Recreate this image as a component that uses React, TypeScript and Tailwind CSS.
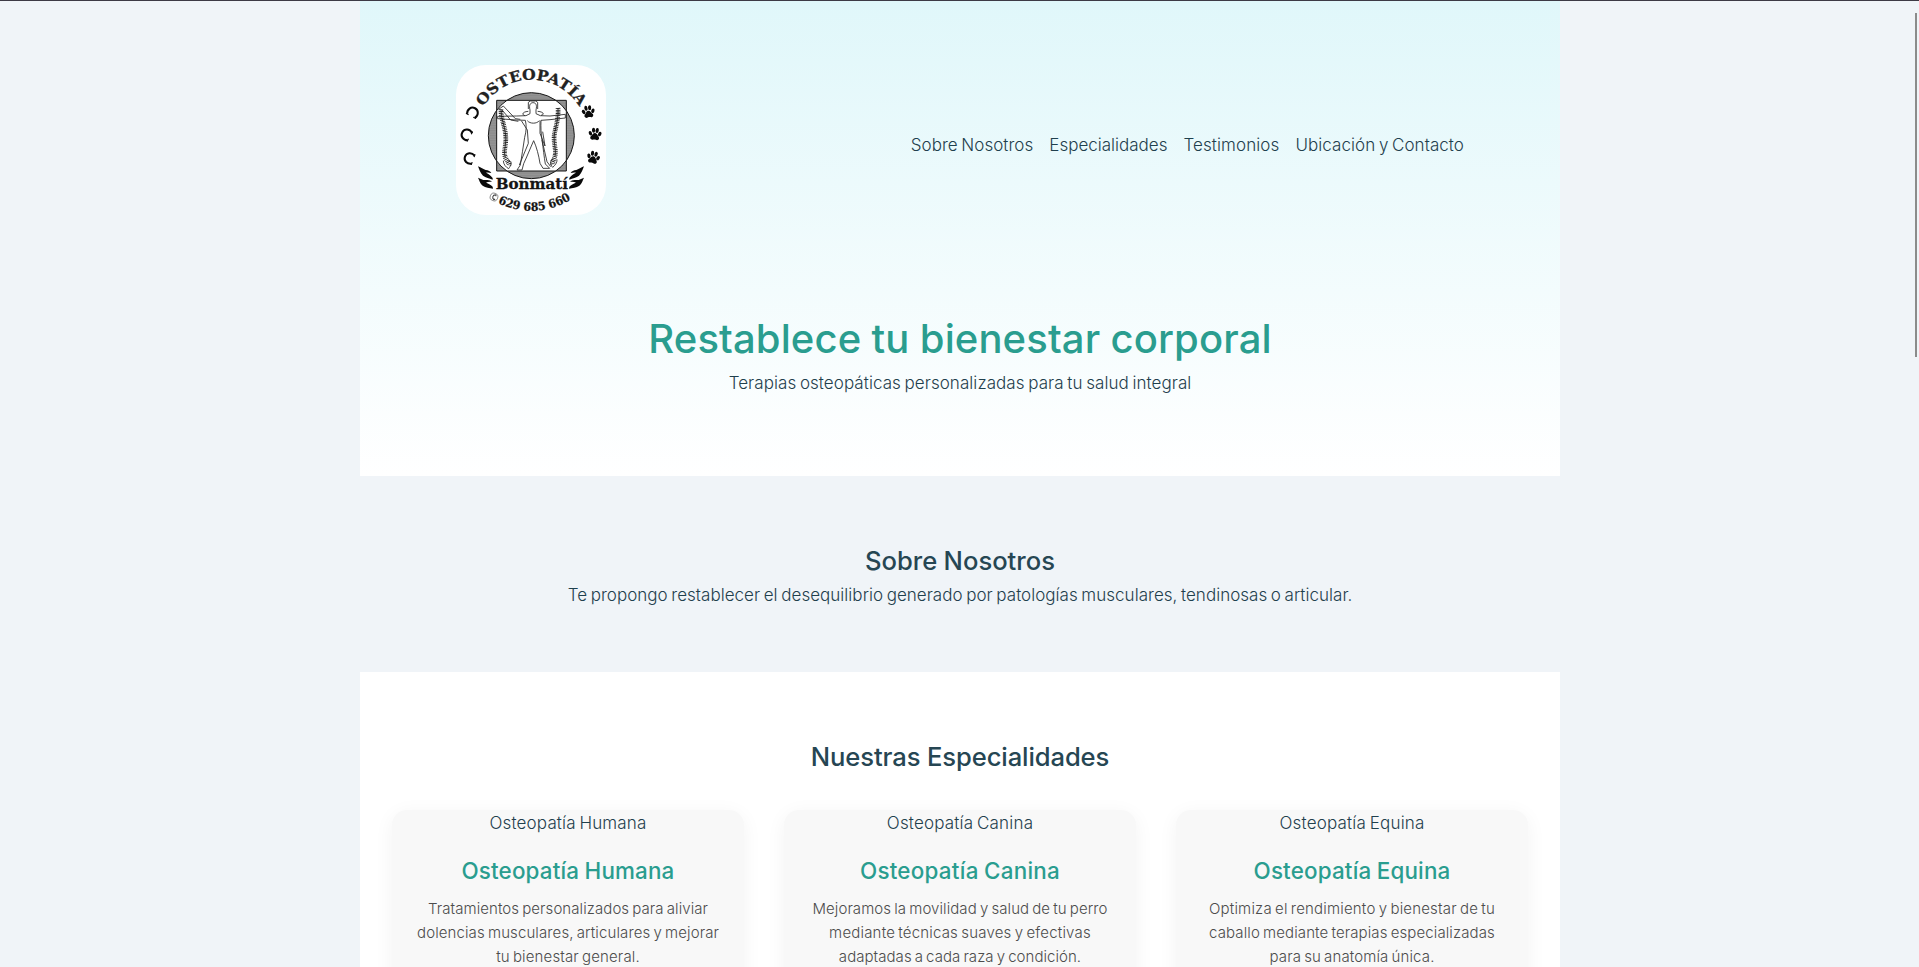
const Paw = ({ x, y, r }: { x: number; y: number; r: number }) => (
  <g transform={`translate(${x} ${y}) rotate(${r})`} fill="#0a0a0a">
    <path d="M0 -4C6 -4 8 3 12 7C16 13 10 19 4 16C1 15 -1 15 -4 16C-10 19 -16 13 -12 7C-8 3 -6 -4 0 -4Z" />
    <ellipse cx="-14" cy="-2" rx="4.8" ry="7" transform="rotate(-25 -14 -2)" />
    <ellipse cx="-5.5" cy="-12" rx="4.8" ry="7.5" transform="rotate(-6 -5.5 -12)" />
    <ellipse cx="5.5" cy="-12" rx="4.8" ry="7.5" transform="rotate(6 5.5 -12)" />
    <ellipse cx="14" cy="-2" rx="4.8" ry="7" transform="rotate(25 14 -2)" />
  </g>
);

const Horseshoe = ({ x, y, r }: { x: number; y: number; r: number }) => (
  <g transform={`translate(${x} ${y}) rotate(${r})`} fill="none" stroke="#0a0a0a">
    <path d="M11 -13C-1 -20 -15 -13 -15 0C-15 13 -1 20 11 13" strokeWidth="6" />
    <path d="M11 -17V-8M11 17V8" strokeWidth="3.5" />
  </g>
);

const Hands = () => (
  <g fill="#0a0a0a">
    <path d="M114 349C121 352 128 357 137 360C145 361 151 364 154 369C147 367 142 367 138 368C146 372 153 377 158 384L158 389C148 385 137 383 129 377C121 370 118 358 114 349Z" />
    <path d="M114 383C122 386 129 391 138 390C146 389 153 391 156 396C148 395 142 396 138 398C146 401 153 404 158 410L159 416C148 413 137 413 128 407C120 400 118 391 114 383Z" />
  </g>
);

const Logo = () => (
  <svg viewBox="48 45 450 450" className="size-[150px] rounded-[30px] bg-white" role="img">
    <defs>
      <path id="top-arc" d="M136.2 352A167.5 167.5 0 1 1 411.8 352" />
      <path id="bottom-arc" d="M91 389A226 226 0 0 0 457 389" />
      <pattern id="engraving" width="5" height="5" patternUnits="userSpaceOnUse">
        <rect width="5" height="5" fill="#a2a2a2" />
        <path d="M0 0H5M0 2.5H5" stroke="#6a6a6a" strokeWidth="1.1" />
      </pattern>
    </defs>
    <path
      fillRule="evenodd"
      fill="url(#engraving)"
      d="M274 128A129 129 0 1 1 273.9 128ZM170 151H379V363H170Z"
    />
    <g fill="none" stroke="#161616">
      <circle cx="274" cy="257" r="129" strokeWidth="3" />
      <path d="M170 151H379V363H170Z" strokeWidth="3" />
    </g>
    <g fill="none" stroke="#2a2a2a" strokeWidth="2.6" strokeLinejoin="round">
      <path d="M173 199L230 198L258 197L270 191V180C266 164 272 158 279 158C287 158 292 164 288 180V191L301 197L330 198L376 193V204L330 209L303 211C302 232 303 250 306 270C310 295 312 320 316 342L329 355H309L300 340C296 315 290 292 281 272C272 292 261 320 251 341L246 360H231L241 345C246 318 249 290 254 262C259 244 260 226 256 211L230 210L173 206Z" />
      <path d="M265 177V157L271 153H287L293 157V177M255 197C243 193 249 185 265 184M303 196C316 193 309 185 293 184" />
      <path d="M176 178L190 168L226 206L241 208M186 180L212 210L235 214M244 212L262 240L265 280L238 345M300 212V250L315 288L308 245M262 212C270 222 290 222 298 212M306 270L321 335L332 350" />
      <path d="M205 330C220 335 212 347 206 356C198 352 190 343 190 332M340 325C329 330 330 344 338 352C345 346 352 338 351 328" />
    </g>
    <g fill="none" stroke="#1c1c1c">
      <path d="M183 178C182 205 194 225 197 255C200 285 189 302 196 322C200 332 208 340 208 346" strokeWidth="14" strokeDasharray="2.6 2.6" />
      <path d="M183 178C182 205 194 225 197 255C200 285 189 302 196 322" strokeWidth="2.5" />
      <path d="M354 174C356 200 350 220 344 248C338 276 350 298 345 318C342 330 336 338 337 344" strokeWidth="14" strokeDasharray="2.6 2.6" />
      <path d="M354 174C356 200 350 220 344 248C338 276 350 298 345 318" strokeWidth="2.5" />
    </g>
    <Horseshoe x={98} y={188} r={118} />
    <Horseshoe x={80} y={254} r={30} />
    <Horseshoe x={89} y={325} r={20} />
    <Paw x={445} y={186} r={-8} />
    <Paw x={465} y={253} r={5} />
    <Paw x={460} y={323} r={14} />
    <Hands />
    <g transform="translate(546 0) scale(-1 1)">
      <Hands />
    </g>
    <g fill="#141414" stroke="#141414" strokeWidth="0.8" className="font-['DejaVu_Serif',serif] font-bold [word-spacing:0px]">
      <text fontSize="44" fill="#222" stroke="#222">
        <textPath href="#top-arc" startOffset="50%" textAnchor="middle" textLength="346" lengthAdjust="spacingAndGlyphs">
          OSTEOPATÍA
        </textPath>
      </text>
      <text x="167" y="416" fontSize="43" textLength="217" lengthAdjust="spacingAndGlyphs">
        Bonmatí
      </text>
      <text fontSize="35">
        <textPath href="#bottom-arc" startOffset="52.4%" textAnchor="middle" textLength="229" lengthAdjust="spacingAndGlyphs">
          629 685 660
        </textPath>
      </text>
    </g>
    <g transform="translate(162 441) rotate(20)" fill="none" stroke="#333">
      <circle r="11.5" strokeWidth="1.5" />
      <path d="M3 -8C-6 -4 -6 4 3 8M3 -8L5 -4M3 8L5 4" strokeWidth="3" />
    </g>
  </svg>
);

const links = [
  { text: "Sobre Nosotros", cls: "tracking-[0.04px]" },
  { text: "Especialidades", cls: "tracking-[0px]" },
  { text: "Testimonios", cls: "tracking-[0.1px]" },
  { text: "Ubicación y Contacto", cls: "tracking-[0.06px]" },
];

const cards = [
  {
    title: "Osteopatía Humana",
    label: "tracking-[0.15px]",
    heading: "tracking-[0.17px]",
    lines: [
      { text: "Tratamientos personalizados para aliviar", cls: "tracking-[0.08px]" },
      { text: "dolencias musculares, articulares y mejorar", cls: "tracking-[0.11px]" },
      { text: "tu bienestar general.", cls: "tracking-[0.14px]" },
    ],
  },
  {
    title: "Osteopatía Canina",
    label: "tracking-[0.18px]",
    heading: "tracking-[0.26px]",
    lines: [
      { text: "Mejoramos la movilidad y salud de tu perro", cls: "tracking-[0.08px]" },
      { text: "mediante técnicas suaves y efectivas", cls: "tracking-[0.19px]" },
      { text: "adaptadas a cada raza y condición.", cls: "tracking-[0.05px]" },
    ],
  },
  {
    title: "Osteopatía Equina",
    label: "tracking-[0.18px]",
    heading: "tracking-[0.18px]",
    lines: [
      { text: "Optimiza el rendimiento y bienestar de tu", cls: "tracking-[0.19px]" },
      { text: "caballo mediante terapias especializadas", cls: "tracking-[0.11px]" },
      { text: "para su anatomía única.", cls: "tracking-[0.12px]" },
    ],
  },
];

export default function App() {
  return (
    <div className="relative h-[967px] overflow-hidden bg-[#f0f4f8] font-['Inter',sans-serif] text-[17px] leading-[27.2px] font-light text-[#1f404d] [word-spacing:-1.2px]">
      <div className="h-px bg-[#3d3a45]" />
      <div className="ml-[360px] w-[1200px]">
        <header className="h-[475px] bg-linear-to-b from-[#e0f7fa] to-white px-24 pt-16">
          <div className="flex h-[150px] items-center justify-between">
            <Logo />
            <nav className="flex gap-4 pt-[11px]">
              {links.map((l) => (
                <a key={l.text} href="#" className={l.cls}>
                  {l.text}
                </a>
              ))}
            </nav>
          </div>
          <div className="pt-[92px] text-center">
            <h1 className="text-[40px] leading-[64px] font-medium tracking-[0.12px] text-[#2a9d8f] [word-spacing:-0.5px]">
              Restablece tu bienestar corporal
            </h1>
            <p className="-mt-px tracking-[0.06px]">Terapias osteopáticas personalizadas para tu salud integral</p>
          </div>
        </header>

        <section className="h-49 pt-16 text-center">
          <h2 className="text-[25.6px] leading-[42px] font-medium text-[#264653] [word-spacing:-0.5px]">Sobre Nosotros</h2>
          <p className="tracking-[0.03px]">
            Te propongo restablecer el desequilibrio generado por patologías musculares, tendinosas o articular.
          </p>
        </section>

        <section className="bg-white px-8 pt-16 pb-16 text-center">
          <h2 className="text-[25.6px] leading-[41px] font-medium tracking-[-0.11px] text-[#264653] [word-spacing:0px]">
            Nuestras Especialidades
          </h2>
          <div className="mt-[33px] grid grid-cols-3 gap-10">
            {cards.map((c) => (
              <article key={c.title} className="rounded-[15px] bg-[#f8f8f8] pb-6 shadow-[0_4px_20px_rgba(0,0,0,0.05)]">
                <div className={c.label}>{c.title}</div>
                <h3 className={`mt-4 text-[22.4px] leading-[36px] font-medium text-[#2a9d8f] [word-spacing:-0.8px] ${c.heading}`}>
                  {c.title}
                </h3>
                <p className="mt-2 text-[15px] leading-6 text-[#4c4c4c]">
                  {c.lines.map((l) => (
                    <span key={l.text} className={`block ${l.cls}`}>
                      {l.text}
                    </span>
                  ))}
                </p>
              </article>
            ))}
          </div>
        </section>
      </div>
      <div className="absolute top-[13px] right-[2px] h-[344px] w-[2px] bg-[#8b8b8b]" />
    </div>
  );
}
